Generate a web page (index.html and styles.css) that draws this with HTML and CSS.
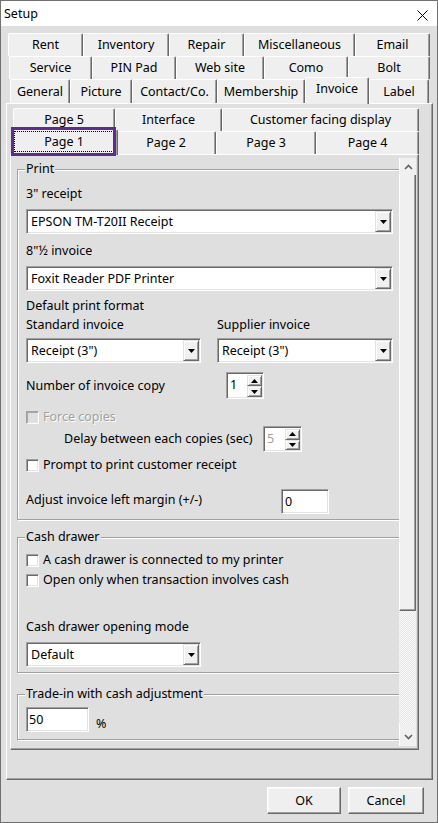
FILE: index.html
```html
<!DOCTYPE html>
<html>
<head>
<meta charset="utf-8">
<title>Setup</title>
<link rel="stylesheet" href="styles.css">
</head>
<body>
<div class="window">
  <div class="titlebar">
    <span class="title">Setup</span>
    <svg class="close" width="11" height="11" viewBox="0 0 11 11"><path d="M0.5 0.5L10.5 10.5M10.5 0.5L0.5 10.5" stroke="#000" stroke-width="1" fill="none"/></svg>
  </div>
  <div class="client">
    <div class="tabs">
      <div class="tabrow r1">
        <div class="tab">Rent</div>
        <div class="tab">Inventory</div>
        <div class="tab">Repair</div>
        <div class="tab">Miscellaneous</div>
        <div class="tab">Email</div>
      </div>
      <div class="tabrow r2">
        <div class="tab">Service</div>
        <div class="tab">PIN Pad</div>
        <div class="tab">Web site</div>
        <div class="tab">Como</div>
        <div class="tab">Bolt</div>
      </div>
      <div class="tabrow r3">
        <div class="tab">General</div>
        <div class="tab">Picture</div>
        <div class="tab">Contact/Co.</div>
        <div class="tab">Membership</div>
        <div class="tab sel">Invoice</div>
        <div class="tab">Label</div>
      </div>
    </div>
    <div class="panel">
      <div class="ptabrow pa">
        <div class="tab">Page 5</div>
        <div class="tab">Interface</div>
        <div class="tab">Customer facing display</div>
      </div>
      <div class="ptabrow pb">
        <div class="tab psel"><span class="focus">Page 1</span></div>
        <div class="tab">Page 2</div>
        <div class="tab">Page 3</div>
        <div class="tab">Page 4</div>
      </div>
      <div class="page">
        <div class="scrollview">
          <div class="content">
            <div class="group g-print">
              <div class="legend">Print</div>
              <div class="lbl first">3" receipt</div>
              <div class="combo full gap7"><span class="val">EPSON TM-T20II Receipt</span><span class="drop"><svg width="7" height="4" viewBox="0 0 7 4"><path d="M0 0H7L3.5 4Z" fill="#000"/></svg></span></div>
              <div class="lbl gap9">8"½ invoice</div>
              <div class="combo full gap7"><span class="val">Foxit Reader PDF Printer</span><span class="drop"><svg width="7" height="4" viewBox="0 0 7 4"><path d="M0 0H7L3.5 4Z" fill="#000"/></svg></span></div>
              <div class="lbl gap7">Default print format</div>
              <div class="two gap3"><div class="lbl">Standard invoice</div><div class="lbl">Supplier invoice</div></div>
              <div class="two gap5">
                <div class="combo"><span class="val">Receipt (3")</span><span class="drop"><svg width="7" height="4" viewBox="0 0 7 4"><path d="M0 0H7L3.5 4Z" fill="#000"/></svg></span></div>
                <div class="combo"><span class="val">Receipt (3")</span><span class="drop"><svg width="7" height="4" viewBox="0 0 7 4"><path d="M0 0H7L3.5 4Z" fill="#000"/></svg></span></div>
              </div>
              <div class="row r-copies">
                <span class="lbl">Number of invoice copy</span>
                <div class="spin s-copies"><span class="sval">1</span><span class="sbtns"><span class="sbtn"><svg width="7" height="4" viewBox="0 0 7 4"><path d="M0 4H7L3.5 0Z" fill="#000"/></svg></span><span class="sbtn"><svg width="7" height="4" viewBox="0 0 7 4"><path d="M0 0H7L3.5 4Z" fill="#000"/></svg></span></span></div>
              </div>
              <div class="chk disabled c-force"><span class="cb"></span><span class="ctext">Force copies</span></div>
              <div class="row r-delay">
                <span class="lbl">Delay between each copies (sec)</span>
                <div class="spin s-delay"><span class="sval dim">5</span><span class="sbtns"><span class="sbtn"><svg width="7" height="4" viewBox="0 0 7 4"><path d="M0 4H7L3.5 0Z" fill="#000"/></svg></span><span class="sbtn"><svg width="7" height="4" viewBox="0 0 7 4"><path d="M0 0H7L3.5 4Z" fill="#000"/></svg></span></span></div>
              </div>
              <div class="chk c-prompt"><span class="cb"></span><span class="ctext">Prompt to print customer receipt</span></div>
              <div class="row r-adjust">
                <span class="lbl">Adjust invoice left margin (+/-)</span>
                <div class="field f-margin">0</div>
              </div>
            </div>

            <div class="group g-cash">
              <div class="legend">Cash drawer</div>
              <div class="chk c-first"><span class="cb"></span><span class="ctext">A cash drawer is connected to my printer</span></div>
              <div class="chk c-second"><span class="cb"></span><span class="ctext">Open only when transaction involves cash</span></div>
              <div class="lbl gap31">Cash drawer opening mode</div>
              <div class="combo half gap7"><span class="val">Default</span><span class="drop"><svg width="7" height="4" viewBox="0 0 7 4"><path d="M0 0H7L3.5 4Z" fill="#000"/></svg></span></div>
            </div>

            <div class="group g-trade">
              <div class="legend">Trade-in with cash adjustment</div>
              <div class="trade-row">
                <div class="field f-trade">50</div>
                <span class="pct">%</span>
              </div>
            </div>
          </div>
          <div class="vscroll">
            <div class="sarrow up"><svg width="9" height="6" viewBox="0 0 9 6"><path d="M1 5L4.5 1.5L8 5" stroke="#606060" stroke-width="1.6" fill="none"/></svg></div>
            <div class="thumb"></div>
            <div class="track"></div>
            <div class="sarrow down"><svg width="9" height="6" viewBox="0 0 9 6"><path d="M1 1L4.5 4.5L8 1" stroke="#606060" stroke-width="1.6" fill="none"/></svg></div>
          </div>
        </div>
      </div>
    </div>
    <div class="buttons">
      <div class="btn ok">OK</div>
      <div class="btn cancel">Cancel</div>
    </div>
  </div>
</div>
<div class="highlight"></div>
</body>
</html>
```

FILE: styles.css
```css
* { box-sizing: border-box; }
html, body { margin: 0; padding: 0; }
body {
  position: relative;
  width: 438px;
  height: 823px;
  overflow: hidden;
  background: #dfdfdf;
  font-family: "Noto Sans", "Liberation Sans", sans-serif;
  font-size: 12.5px;
  line-height: 16px;
  color: #000;
}
.window {
  width: 438px;
  height: 823px;
  border: 1px solid #707070;
  background: #dfdfdf;
  display: flex;
  flex-direction: column;
}
.titlebar {
  height: 25px;
  flex: none;
  background: #fff;
  display: flex;
  align-items: center;
  justify-content: space-between;
  padding: 0 9px 0 3px;
}
.close { margin-top: 3px; }
.client {
  flex: 1;
  display: flex;
  flex-direction: column;
  padding-top: 7px;
}

/* tabs */
.tabrow { display: grid; height: 23px; }
.r1 { margin-left: 7px; grid-template-columns: 75px 86px 75px 111px 75px; }
.r2 { margin-left: 8px; grid-template-columns: 83px 84px 88px 84px 82px; }
.r3 { margin-left: 9px; height: 24px; grid-template-columns: 60px 62px 85px 88px 64px 60px; }
.tab {
  background: #efefef;
  border-top: 1px solid #fff;
  border-left: 1px solid #fff;
  border-right: 1px solid #696969;
  box-shadow: inset -1px 0 #a0a0a0;
  border-radius: 2px 2px 0 0;
  display: flex;
  align-items: center;
  justify-content: center;
  white-space: nowrap;
}
.tab.sel {
  position: relative;
  z-index: 2;
  margin-top: -2px;
  margin-bottom: -1px;
  padding-bottom: 5px;
}

.panel {
  margin-left: 5px;
  width: 427px;
  height: 677px;
  flex: none;
  background: #dfdfdf;
  border-top: 1px solid #fff;
  border-left: 1px solid #fff;
  border-right: 1px solid #696969;
  border-bottom: 1px solid #696969;
  box-shadow: inset -1px -1px #a0a0a0;
  padding: 4px 0 0 3px;
}
.ptabrow { display: grid; height: 23px; margin-left: 3px; }
.pa { grid-template-columns: 102px 107px 197px; }
.pb { grid-template-columns: 103px 100px 100px 103px; }
.tab.psel {
  position: relative;
  z-index: 2;
  margin: -2px -2px -1px -2px;
  padding: 1px 3px 3px 2px;
  align-items: stretch;
}
.focus {
  flex: 1;
  border: 1px dotted #000;
  display: flex;
  align-items: center;
  justify-content: center;
}
.page {
  width: 409px;
  height: 596px;
  background: #dfdfdf;
  border-top: 1px solid #fff;
  border-left: 1px solid #fff;
  border-right: 1px solid #696969;
  border-bottom: 1px solid #696969;
  box-shadow: inset -1px -1px #a0a0a0;
  padding: 2px;
}
.scrollview {
  display: flex;
  height: 100%;
}
.content {
  width: 386px;
  overflow: hidden;
  padding-top: 12px;
}

/* group boxes */
.group {
  width: 385px;
  margin-left: 4px;
  border: 1px solid #a0a0a0;
  box-shadow: inset 1px 1px #fff, 1px 1px #fff;
  padding: 0 8px 5px 8px;
}
.g-cash { margin-top: 17px; }
.g-trade { margin-top: 21px; padding-bottom: 7px; }
.legend {
  width: max-content;
  margin: -9px 0 0 -1px;
  padding: 0 1px;
  background: #dfdfdf;
  height: 16px;
}
.lbl { height: 16px; white-space: nowrap; }
.first { margin-top: 9px; }
.gap3 { margin-top: 3px; }
.gap5 { margin-top: 5px; }
.gap7 { margin-top: 7px; }
.gap9 { margin-top: 9px; }
.gap31 { margin-top: 31px; }

.two { display: grid; grid-template-columns: 175px 176px; column-gap: 16px; }

/* combo box */
.combo {
  height: 25px;
  background: #fff;
  border: 1px solid;
  border-color: #a0a0a0 #fff #fff #a0a0a0;
  box-shadow: inset 1px 1px #696969, inset -1px -1px #e3e3e3;
  padding: 1px;
  display: flex;
  align-items: center;
}
.combo.half { width: 175px; }
.val { flex: 1; padding-left: 3px; white-space: nowrap; }
.drop {
  width: 16px;
  height: 21px;
  background: #f0f0f0;
  border: 1px solid;
  border-color: #e3e3e3 #696969 #696969 #e3e3e3;
  box-shadow: inset 1px 1px #fff, inset -1px -1px #a0a0a0;
  display: flex;
  align-items: center;
  justify-content: center;
}
.drop svg { display: block; margin-top: 1px; }

/* spinners */
.row { display: grid; align-items: center; }
.r-copies { margin-top: 9px; grid-template-columns: 200px auto; height: 27px; }
.r-delay { margin-top: 1px; grid-template-columns: 237px auto; height: 26px; }
.r-delay .lbl { padding-left: 38px; }
.r-adjust { margin-top: 16px; grid-template-columns: 255px auto; height: 25px; }
.r-adjust .lbl { margin-bottom: 4px; }
.spin {
  width: 38px;
  height: 27px;
  background: #fff;
  border: 1px solid;
  border-color: #a0a0a0 #fff #fff #a0a0a0;
  box-shadow: inset 1px 1px #696969, inset -1px -1px #e3e3e3;
  padding: 2px 1px 1px 1px;
  display: flex;
}
.s-delay { width: 39px; height: 26px; }
.sval { flex: 1; padding-left: 2px; line-height: 20px; }
.sval.dim { color: #a0a0a0; }
.sbtns { width: 15px; display: flex; flex-direction: column; }
.sbtn {
  flex: 1;
  background: #f0f0f0;
  border: 1px solid;
  border-color: #e3e3e3 #696969 #696969 #e3e3e3;
  box-shadow: inset 1px 1px #fff, inset -1px -1px #a0a0a0;
  display: flex;
  align-items: center;
  justify-content: center;
}
.sbtn svg { display: block; }

/* checkboxes */
.chk { display: flex; align-items: center; height: 16px; gap: 4px; white-space: nowrap; }
.c-force { margin-top: 10px; }
.c-prompt { margin-top: 5px; }
.c-first { margin-top: 7px; }
.c-second { margin-top: 4px; }
.cb {
  width: 13px;
  height: 13px;
  flex: none;
  background: #fff;
  border: 1px solid;
  border-color: #a0a0a0 #fff #fff #a0a0a0;
  box-shadow: inset 1px 1px #696969, inset -1px -1px #e3e3e3;
}
.chk.disabled .cb { background: #dfdfdf; box-shadow: inset 1px 1px #a8a8a8, inset -1px -1px #e3e3e3; }
.chk.disabled .ctext { color: #a0a0a0; text-shadow: 1px 1px #fff; }

/* text fields */
.field {
  height: 25px;
  background: #fff;
  border: 1px solid;
  border-color: #a0a0a0 #fff #fff #a0a0a0;
  box-shadow: inset 1px 1px #696969, inset -1px -1px #e3e3e3;
  padding: 3px 0 0 3px;
  line-height: 18px;
}
.f-margin { width: 48px; }
.trade-row { margin-top: 5px; display: flex; align-items: flex-end; gap: 7px; }
.f-trade { width: 63px; padding-left: 2px; }
.pct { height: 16px; }

/* scrollbar */
.vscroll {
  width: 17px;
  display: flex;
  flex-direction: column;
  margin-top: 1px;
  margin-bottom: 1px;
  background: repeating-conic-gradient(#fafafa 0 25%, #e6e6e6 0 50%) 0 0 / 2px 2px;
}
.sarrow {
  height: 17px;
  background: #f0f0f0;
  border-left: 1px solid #fff;
  display: flex;
  align-items: center;
  justify-content: center;
}
.sarrow.down { height: 22px; align-items: flex-end; padding-bottom: 6px; }
.thumb {
  height: 436px;
  background: #f0f0f0;
  border-left: 1px solid #fff;
  border-right: 1px solid #696969;
  border-bottom: 1px solid #696969;
  box-shadow: inset -1px -1px #a0a0a0;
}
.track { flex: 1; }

/* buttons */
.buttons {
  display: flex;
  justify-content: flex-end;
  gap: 7px;
  margin-top: 7px;
  padding-right: 13px;
}
.btn {
  height: 27px;
  background: #efefef;
  border: 1px solid;
  border-color: #fff #696969 #696969 #fff;
  box-shadow: inset -1px -1px #a0a0a0, inset 1px 1px #f8f8f8;
  display: flex;
  align-items: center;
  justify-content: center;
}
.ok { width: 74px; }
.cancel { width: 76px; }

/* annotation highlight around the focused tab */
.highlight {
  position: absolute;
  z-index: 10;
  left: 11px;
  top: 127px;
  width: 105px;
  height: 29px;
  border: 3px solid #5f2b8c;
  pointer-events: none;
}
```
